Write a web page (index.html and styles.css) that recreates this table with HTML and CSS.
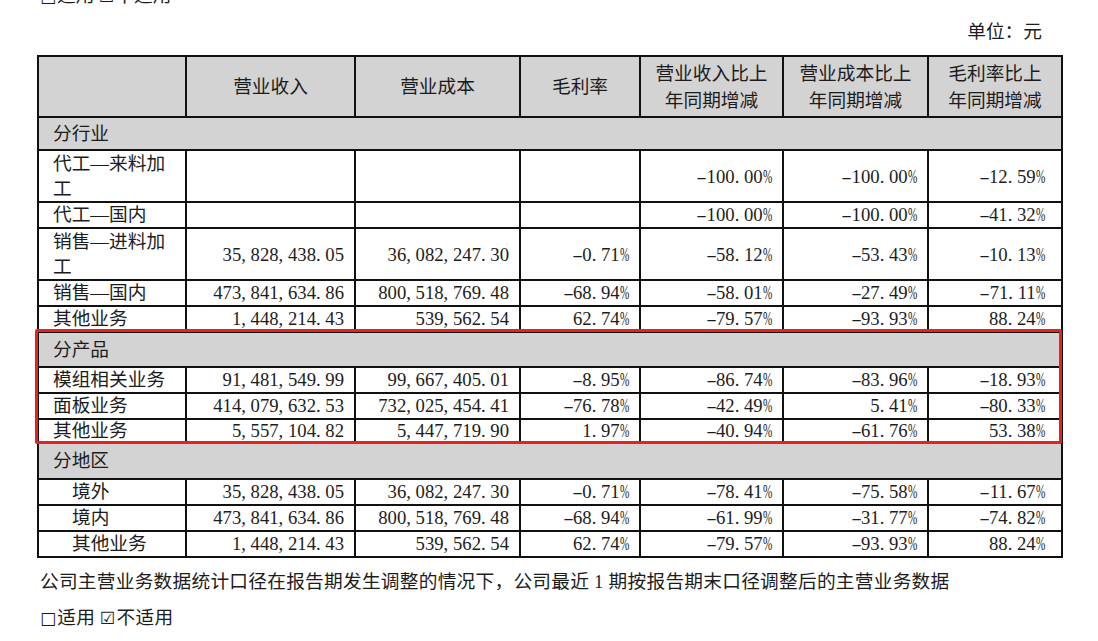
FILE: index.html
```html
<!DOCTYPE html>
<html lang="zh">
<head>
<meta charset="utf-8">
<title>主营业务构成</title>
<link rel="stylesheet" href="styles.css">
</head>
<body>
<div class="page">
  <p class="prev"><span class="box">□</span>适用 <span class="box">☑</span>不适用</p>
  <p class="unit">单位：元</p>
  <div class="wrap">
    <table class="tbl">
      <colgroup>
        <col class="c1"><col class="c2"><col class="c3"><col class="c4"><col class="c5"><col class="c6"><col class="c7">
      </colgroup>
      <tr class="rh">
        <th></th>
        <th>营业收入</th>
        <th>营业成本</th>
        <th>毛利率</th>
        <th>营业收入比上<br>年同期增减</th>
        <th>营业成本比上<br>年同期增减</th>
        <th>毛利率比上<br>年同期增减</th>
      </tr>
      <tr class="sec"><td colspan="7">分行业</td></tr>
      <tr class="tall">
        <td>代工—来料加工</td><td class="n"></td><td class="n"></td><td class="n"></td>
        <td class="n"><i class="m">-</i>100<i>.</i>00<i class="p">%</i></td>
        <td class="n"><i class="m">-</i>100<i>.</i>00<i class="p">%</i></td>
        <td class="n last"><i class="m">-</i>12<i>.</i>59<i class="p">%</i></td>
      </tr>
      <tr class="r">
        <td>代工—国内</td><td class="n"></td><td class="n"></td><td class="n"></td>
        <td class="n"><i class="m">-</i>100<i>.</i>00<i class="p">%</i></td>
        <td class="n"><i class="m">-</i>100<i>.</i>00<i class="p">%</i></td>
        <td class="n last"><i class="m">-</i>41<i>.</i>32<i class="p">%</i></td>
      </tr>
      <tr class="tall">
        <td>销售—进料加工</td>
        <td class="n">35<i>,</i>828<i>,</i>438<i>.</i>05</td>
        <td class="n">36<i>,</i>082<i>,</i>247<i>.</i>30</td>
        <td class="n"><i class="m">-</i>0<i>.</i>71<i class="p">%</i></td>
        <td class="n"><i class="m">-</i>58<i>.</i>12<i class="p">%</i></td>
        <td class="n"><i class="m">-</i>53<i>.</i>43<i class="p">%</i></td>
        <td class="n last"><i class="m">-</i>10<i>.</i>13<i class="p">%</i></td>
      </tr>
      <tr class="r">
        <td>销售—国内</td>
        <td class="n">473<i>,</i>841<i>,</i>634<i>.</i>86</td>
        <td class="n">800<i>,</i>518<i>,</i>769<i>.</i>48</td>
        <td class="n"><i class="m">-</i>68<i>.</i>94<i class="p">%</i></td>
        <td class="n"><i class="m">-</i>58<i>.</i>01<i class="p">%</i></td>
        <td class="n"><i class="m">-</i>27<i>.</i>49<i class="p">%</i></td>
        <td class="n last"><i class="m">-</i>71<i>.</i>11<i class="p">%</i></td>
      </tr>
      <tr class="r">
        <td>其他业务</td>
        <td class="n">1<i>,</i>448<i>,</i>214<i>.</i>43</td>
        <td class="n">539<i>,</i>562<i>.</i>54</td>
        <td class="n">62<i>.</i>74<i class="p">%</i></td>
        <td class="n"><i class="m">-</i>79<i>.</i>57<i class="p">%</i></td>
        <td class="n"><i class="m">-</i>93<i>.</i>93<i class="p">%</i></td>
        <td class="n last">88<i>.</i>24<i class="p">%</i></td>
      </tr>
      <tr class="sec sec2"><td colspan="7">分产品</td></tr>
      <tr class="r">
        <td>模组相关业务</td>
        <td class="n">91<i>,</i>481<i>,</i>549<i>.</i>99</td>
        <td class="n">99<i>,</i>667<i>,</i>405<i>.</i>01</td>
        <td class="n"><i class="m">-</i>8<i>.</i>95<i class="p">%</i></td>
        <td class="n"><i class="m">-</i>86<i>.</i>74<i class="p">%</i></td>
        <td class="n"><i class="m">-</i>83<i>.</i>96<i class="p">%</i></td>
        <td class="n last"><i class="m">-</i>18<i>.</i>93<i class="p">%</i></td>
      </tr>
      <tr class="r">
        <td>面板业务</td>
        <td class="n">414<i>,</i>079<i>,</i>632<i>.</i>53</td>
        <td class="n">732<i>,</i>025<i>,</i>454<i>.</i>41</td>
        <td class="n"><i class="m">-</i>76<i>.</i>78<i class="p">%</i></td>
        <td class="n"><i class="m">-</i>42<i>.</i>49<i class="p">%</i></td>
        <td class="n">5<i>.</i>41<i class="p">%</i></td>
        <td class="n last"><i class="m">-</i>80<i>.</i>33<i class="p">%</i></td>
      </tr>
      <tr class="r r24">
        <td>其他业务</td>
        <td class="n">5<i>,</i>557<i>,</i>104<i>.</i>82</td>
        <td class="n">5<i>,</i>447<i>,</i>719<i>.</i>90</td>
        <td class="n">1<i>.</i>97<i class="p">%</i></td>
        <td class="n"><i class="m">-</i>40<i>.</i>94<i class="p">%</i></td>
        <td class="n"><i class="m">-</i>61<i>.</i>76<i class="p">%</i></td>
        <td class="n last">53<i>.</i>38<i class="p">%</i></td>
      </tr>
      <tr class="sec sec3"><td colspan="7">分地区</td></tr>
      <tr class="r">
        <td class="ind">境外</td>
        <td class="n">35<i>,</i>828<i>,</i>438<i>.</i>05</td>
        <td class="n">36<i>,</i>082<i>,</i>247<i>.</i>30</td>
        <td class="n"><i class="m">-</i>0<i>.</i>71<i class="p">%</i></td>
        <td class="n"><i class="m">-</i>78<i>.</i>41<i class="p">%</i></td>
        <td class="n"><i class="m">-</i>75<i>.</i>58<i class="p">%</i></td>
        <td class="n last"><i class="m">-</i>11<i>.</i>67<i class="p">%</i></td>
      </tr>
      <tr class="r">
        <td class="ind">境内</td>
        <td class="n">473<i>,</i>841<i>,</i>634<i>.</i>86</td>
        <td class="n">800<i>,</i>518<i>,</i>769<i>.</i>48</td>
        <td class="n"><i class="m">-</i>68<i>.</i>94<i class="p">%</i></td>
        <td class="n"><i class="m">-</i>61<i>.</i>99<i class="p">%</i></td>
        <td class="n"><i class="m">-</i>31<i>.</i>77<i class="p">%</i></td>
        <td class="n last"><i class="m">-</i>74<i>.</i>82<i class="p">%</i></td>
      </tr>
      <tr class="r">
        <td class="ind">其他业务</td>
        <td class="n">1<i>,</i>448<i>,</i>214<i>.</i>43</td>
        <td class="n">539<i>,</i>562<i>.</i>54</td>
        <td class="n">62<i>.</i>74<i class="p">%</i></td>
        <td class="n"><i class="m">-</i>79<i>.</i>57<i class="p">%</i></td>
        <td class="n"><i class="m">-</i>93<i>.</i>93<i class="p">%</i></td>
        <td class="n last">88<i>.</i>24<i class="p">%</i></td>
      </tr>
    </table>
    <div class="hl"></div>
  </div>
  <p class="note">公司主营业务数据统计口径在报告期发生调整的情况下，公司最近 1 期按报告期末口径调整后的主营业务数据</p>
  <p class="note"><span class="box">□</span>适用 <span class="box">☑</span>不适用</p>
</div>
</body>
</html>
```

FILE: styles.css
```css
html, body {
  margin: 0;
  padding: 0;
  background: #ffffff;
}

body {
  font-family: "Liberation Serif", "Noto Sans CJK SC", serif;
  font-size: 18.7px;
  color: #1c1c1c;
  overflow: hidden;
  height: 641px;
}

.page {
  width: 1024px;
  padding-left: 37px;
}

p {
  margin: 0;
}

.prev {
  margin-top: -14px;
  height: 20px;
  line-height: 20px;
  padding-left: 3px;
}

.unit {
  margin-top: 14px;
  line-height: 24px;
  text-align: right;
  padding-right: 19px;
}

.wrap {
  position: relative;
  margin-top: 11px;
}

.tbl {
  border-collapse: collapse;
  table-layout: fixed;
  width: 1024px;
}

.c1 { width: 148px; }
.c2 { width: 169px; }
.c3 { width: 165px; }
.c4 { width: 120px; }
.c5 { width: 143px; }
.c6 { width: 145px; }
.c7 { width: 134px; }

.tbl th,
.tbl td {
  border: 2px solid #111111;
  padding: 0 10px 0 14px;
  vertical-align: middle;
  font-size: 18.7px;
  line-height: 20px;
}

.tbl th {
  background: #d3d3d3;
  font-weight: normal;
  text-align: center;
  line-height: 27px;
  padding: 0 4px;
}

.tbl .tall td {
  line-height: 25px;
}

.rh { height: 61px; }
.sec { height: 33px; }
.sec2 { height: 35px; }
.sec3 { height: 36px; }
.tall { height: 52px; }
.r { height: 26px; }
.r24 { height: 24px; }

.sec td {
  background: #d3d3d3;
}

.n {
  text-align: right;
  white-space: nowrap;
}

.tbl td.last {
  padding-right: 16px;
}

.tbl td.ind {
  padding-left: 33px;
}

.tbl i {
  font-style: normal;
  display: inline-block;
  width: 0.5em;
  text-align: left;
}

.tbl i.m {
  text-align: center;
  transform: scaleX(1.7);
}

.tbl i.p {
  transform: scaleX(0.6);
  transform-origin: left center;
  white-space: nowrap;
}

.hl {
  position: absolute;
  left: -2px;
  top: 274px;
  width: 1027px;
  height: 115px;
  border: 3px solid #e3231f;
  border-radius: 2px;
  box-sizing: border-box;
}

.note {
  margin-top: 12px;
  line-height: 24px;
  padding-left: 3px;
  letter-spacing: 0.25px;
}

.box {
  font-family: "DejaVu Sans", sans-serif;
  font-size: 17px;
  margin-right: 1px;
}
```
